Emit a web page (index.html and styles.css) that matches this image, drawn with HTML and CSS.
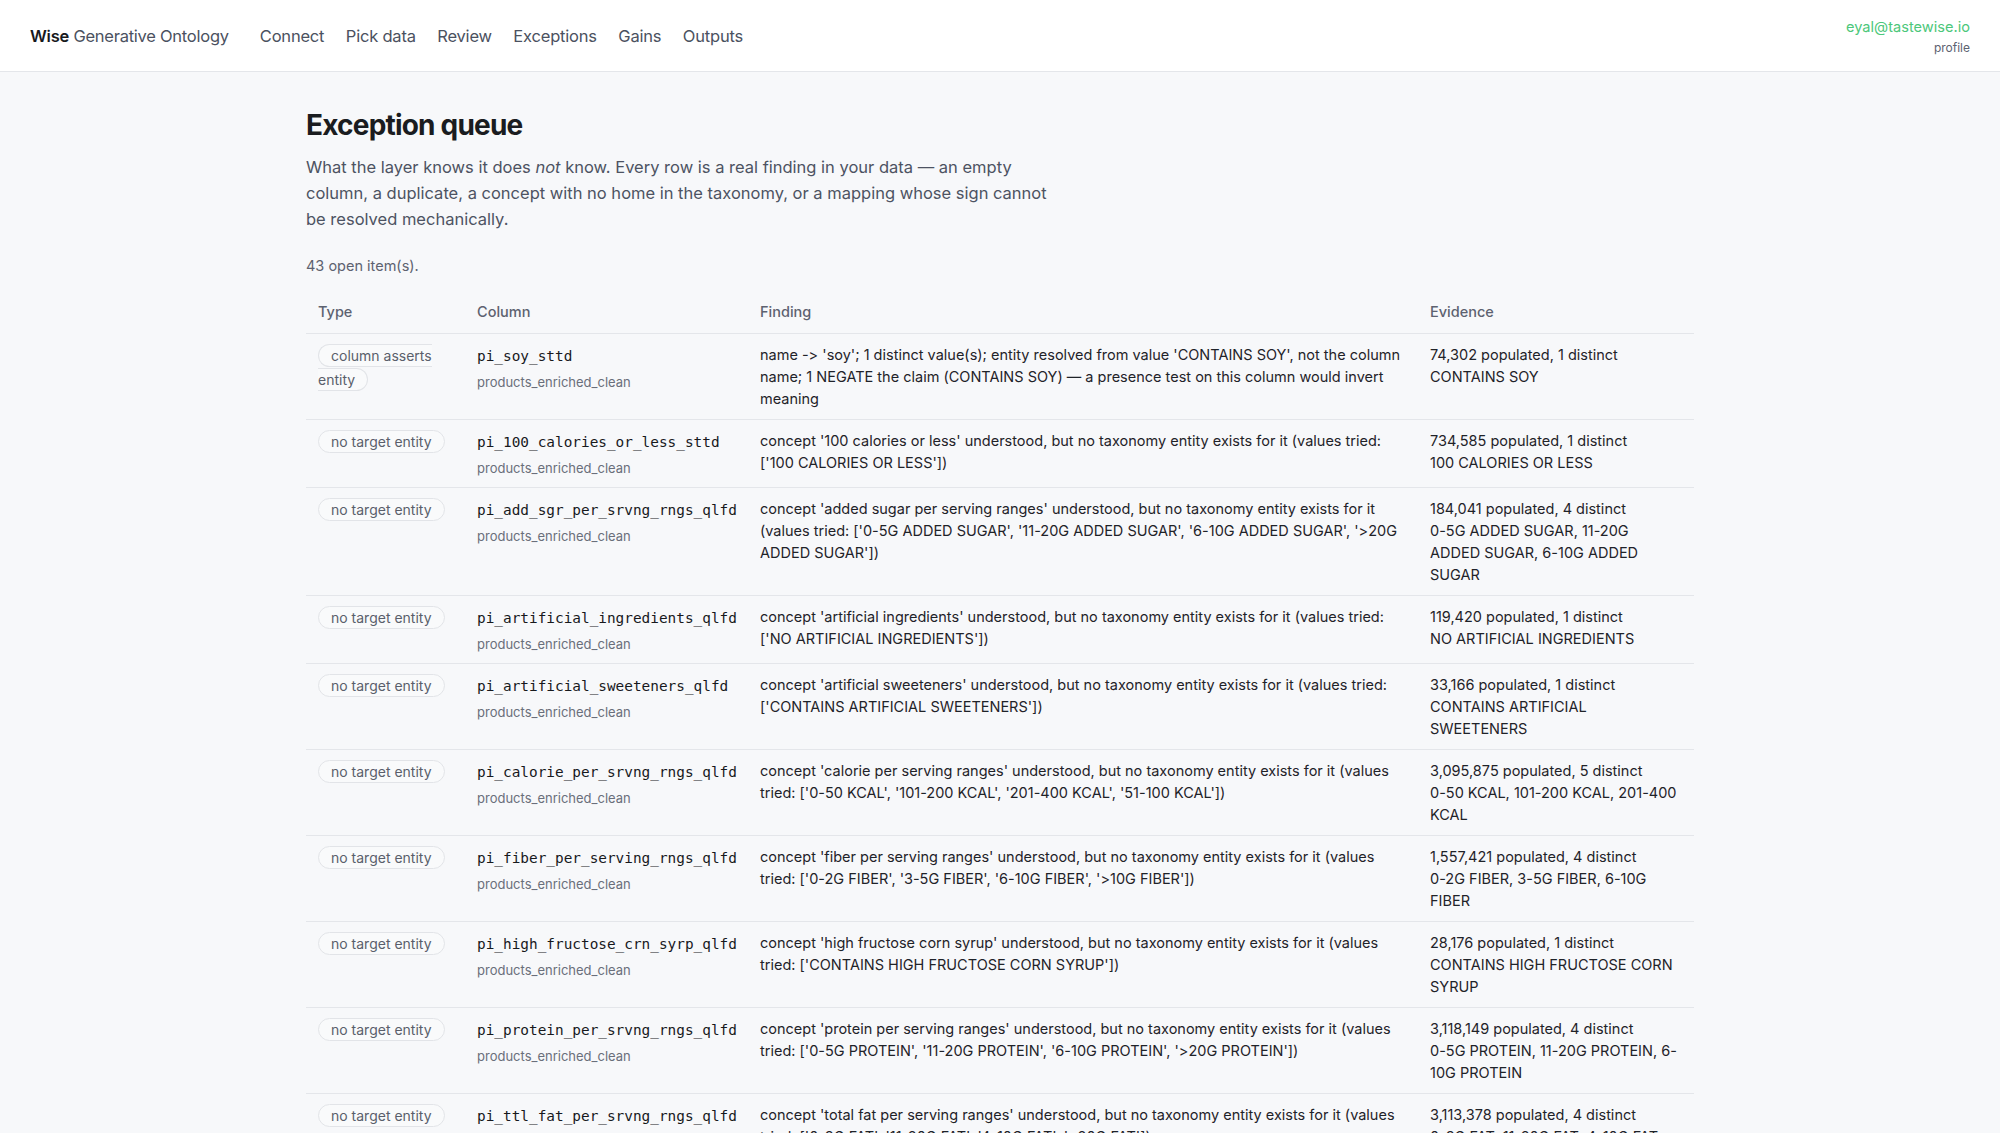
FILE: index.html
```html
<!DOCTYPE html>
<html lang="en">
<head>
    <meta charset="UTF-8">
    <title>Exception queue · Wise Generative Ontology</title>
    <link rel="stylesheet" href="styles.css">
</head>
<body>
    <header class="topbar">
        <div class="brand"><b>Wise</b> Generative Ontology</div>
        <nav class="nav">
            <a href="#">Connect</a>
            <a href="#">Pick data</a>
            <a href="#">Review</a>
            <a href="#">Exceptions</a>
            <a href="#">Gains</a>
            <a href="#">Outputs</a>
        </nav>
        <div class="user">
            <span class="email">eyal@tastewise.io</span>
            <a class="profile" href="#">profile</a>
        </div>
    </header>

    <main class="page">
        <h1>Exception queue</h1>
        <p class="lead">What the layer knows it does <em>not</em> know. Every row is a real finding in your data — an empty column, a duplicate, a concept with no home in the taxonomy, or a mapping whose sign cannot be resolved mechanically.</p>
        <p class="count">43 open item(s).</p>

        <table class="queue">
            <colgroup>
                <col class="c-type">
                <col class="c-col">
                <col class="c-find">
                <col class="c-ev">
            </colgroup>
            <thead>
                <tr>
                    <th>Type</th>
                    <th>Column</th>
                    <th>Finding</th>
                    <th>Evidence</th>
                </tr>
            </thead>
            <tbody>
                <tr>
                    <td><span class="pill">column asserts entity</span></td>
                    <td><div class="colname">pi_soy_sttd</div><div class="tbl">products_enriched_clean</div></td>
                    <td>name -&gt; 'soy'; 1 distinct value(s); entity resolved from value 'CONTAINS SOY', not the column name; 1 NEGATE the claim (CONTAINS SOY) — a presence test on this column would invert meaning</td>
                    <td class="ev">74,302 populated, 1 distinct<br>CONTAINS SOY</td>
                </tr>
                <tr>
                    <td><span class="pill">no target entity</span></td>
                    <td><div class="colname">pi_100_calories_or_less_sttd</div><div class="tbl">products_enriched_clean</div></td>
                    <td>concept '100 calories or less' understood, but no taxonomy entity exists for it (values tried: ['100 CALORIES OR LESS'])</td>
                    <td class="ev">734,585 populated, 1 distinct<br>100 CALORIES OR LESS</td>
                </tr>
                <tr>
                    <td><span class="pill">no target entity</span></td>
                    <td><div class="colname">pi_add_sgr_per_srvng_rngs_qlfd</div><div class="tbl">products_enriched_clean</div></td>
                    <td>concept 'added sugar per serving ranges' understood, but no taxonomy entity exists for it (values tried: ['0-5G ADDED SUGAR', '11-20G ADDED SUGAR', '6-10G ADDED SUGAR', '&gt;20G ADDED SUGAR'])</td>
                    <td class="ev">184,041 populated, 4 distinct<br>0-5G ADDED SUGAR, 11-20G ADDED SUGAR, 6-10G ADDED SUGAR</td>
                </tr>
                <tr>
                    <td><span class="pill">no target entity</span></td>
                    <td><div class="colname">pi_artificial_ingredients_qlfd</div><div class="tbl">products_enriched_clean</div></td>
                    <td>concept 'artificial ingredients' understood, but no taxonomy entity exists for it (values tried: ['NO ARTIFICIAL INGREDIENTS'])</td>
                    <td class="ev">119,420 populated, 1 distinct<br>NO ARTIFICIAL INGREDIENTS</td>
                </tr>
                <tr>
                    <td><span class="pill">no target entity</span></td>
                    <td><div class="colname">pi_artificial_sweeteners_qlfd</div><div class="tbl">products_enriched_clean</div></td>
                    <td>concept 'artificial sweeteners' understood, but no taxonomy entity exists for it (values tried: ['CONTAINS ARTIFICIAL SWEETENERS'])</td>
                    <td class="ev">33,166 populated, 1 distinct<br>CONTAINS ARTIFICIAL SWEETENERS</td>
                </tr>
                <tr>
                    <td><span class="pill">no target entity</span></td>
                    <td><div class="colname">pi_calorie_per_srvng_rngs_qlfd</div><div class="tbl">products_enriched_clean</div></td>
                    <td>concept 'calorie per serving ranges' understood, but no taxonomy entity exists for it (values tried: ['0-50 KCAL', '101-200 KCAL', '201-400 KCAL', '51-100 KCAL'])</td>
                    <td class="ev">3,095,875 populated, 5 distinct<br>0-50 KCAL, 101-200 KCAL, 201-400 KCAL</td>
                </tr>
                <tr>
                    <td><span class="pill">no target entity</span></td>
                    <td><div class="colname">pi_fiber_per_serving_rngs_qlfd</div><div class="tbl">products_enriched_clean</div></td>
                    <td>concept 'fiber per serving ranges' understood, but no taxonomy entity exists for it (values tried: ['0-2G FIBER', '3-5G FIBER', '6-10G FIBER', '&gt;10G FIBER'])</td>
                    <td class="ev">1,557,421 populated, 4 distinct<br>0-2G FIBER, 3-5G FIBER, 6-10G FIBER</td>
                </tr>
                <tr>
                    <td><span class="pill">no target entity</span></td>
                    <td><div class="colname">pi_high_fructose_crn_syrp_qlfd</div><div class="tbl">products_enriched_clean</div></td>
                    <td>concept 'high fructose corn syrup' understood, but no taxonomy entity exists for it (values tried: ['CONTAINS HIGH FRUCTOSE CORN SYRUP'])</td>
                    <td class="ev">28,176 populated, 1 distinct<br>CONTAINS HIGH FRUCTOSE CORN SYRUP</td>
                </tr>
                <tr>
                    <td><span class="pill">no target entity</span></td>
                    <td><div class="colname">pi_protein_per_srvng_rngs_qlfd</div><div class="tbl">products_enriched_clean</div></td>
                    <td>concept 'protein per serving ranges' understood, but no taxonomy entity exists for it (values tried: ['0-5G PROTEIN', '11-20G PROTEIN', '6-10G PROTEIN', '&gt;20G PROTEIN'])</td>
                    <td class="ev">3,118,149 populated, 4 distinct<br>0-5G PROTEIN, 11-20G PROTEIN, 6-10G PROTEIN</td>
                </tr>
                <tr>
                    <td><span class="pill">no target entity</span></td>
                    <td><div class="colname">pi_ttl_fat_per_srvng_rngs_qlfd</div><div class="tbl">products_enriched_clean</div></td>
                    <td>concept 'total fat per serving ranges' understood, but no taxonomy entity exists for it (values tried: ['0-3G FAT', '11-20G FAT', '4-10G FAT', '&gt;20G FAT'])</td>
                    <td class="ev">3,113,378 populated, 4 distinct<br>0-3G FAT, 11-20G FAT, 4-10G FAT</td>
                </tr>
            </tbody>
        </table>
    </main>
</body>
</html>
```

FILE: styles.css
```css
body {
    margin: 0;
    font-family: Inter, "Noto Sans", sans-serif;
    font-variant-ligatures: none;
    font-feature-settings: "calt" 0, "liga" 0;
    background: #f7f8fa;
    color: #1f2329;
}
a {
    color: inherit;
    text-decoration: none;
}
.topbar {
    display: flex;
    align-items: center;
    height: 72px;
    padding: 0 30px;
    background: #fff;
    border-bottom: 1px solid #e4e6ea;
    box-sizing: border-box;
}
.brand {
    font-size: 16.5px;
    color: #4b5160;
    letter-spacing: -0.25px;
}
.brand b {
    color: #17191d;
    font-weight: 600;
}
.nav {
    display: flex;
    gap: 21.5px;
    margin-left: 31px;
    font-size: 16.5px;
    letter-spacing: -0.2px;
}
.nav a {
    color: #4b5160;
}
.user {
    margin-left: auto;
    display: flex;
    flex-direction: column;
    align-items: flex-end;
    margin-top: 2px;
}
.email {
    color: #4cc77a;
    font-size: 14.6px;
}
.profile {
    font-size: 12px;
    color: #5d6270;
    margin-top: 4px;
}
.page {
    max-width: 1388px;
    margin: 0 auto;
    padding-bottom: 40px;
}
h1 {
    font-size: 28px;
    font-weight: 700;
    letter-spacing: -0.8px;
    line-height: 36px;
    margin: 35px 0 11px;
    color: #1a1c20;
}
.lead {
    font-size: 16.5px;
    line-height: 26px;
    color: #4d5362;
    max-width: 750px;
    margin: 0;
}
.count {
    font-size: 14.5px;
    line-height: 18px;
    color: #5d6270;
    margin: 25px 0 20px;
}
.queue {
    width: 100%;
    table-layout: fixed;
    border-collapse: collapse;
    font-size: 14.5px;
    line-height: 22px;
}
.c-type { width: 159px; }
.c-col { width: 283px; }
.c-find { width: 670px; }
.c-ev { width: 276px; }
.queue th {
    text-align: left;
    font-weight: 500;
    color: #5d6270;
    padding: 6px 12px 10px;
    border-bottom: 1px solid #e4e6ea;
}
.queue td {
    vertical-align: top;
    padding: 9.5px 12px;
    border-bottom: 1px solid #e4e6ea;
    color: #1f2329;
}
.pill {
    font-size: 14px;
    color: #5a5f6b;
    padding: 2px 12px;
    border: 1px solid #e2e4e8;
    border-radius: 12px;
    background: #f9fafb;
    line-height: 24px;
}
.colname {
    font-family: "DejaVu Sans Mono", "Liberation Mono", monospace;
    font-size: 14.4px;
    color: #17191d;
    line-height: 25px;
}
.tbl {
    font-size: 13px;
    color: #6a6f7b;
    margin-top: 3px;
    line-height: 20px;
}
.ev {
    color: #6a6f7b;
}
```
